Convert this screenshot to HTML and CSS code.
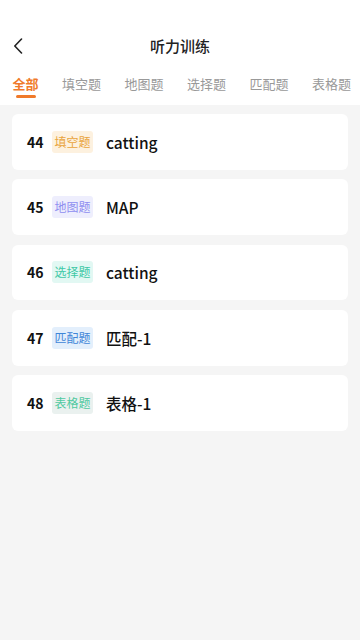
FILE: index.html
```html
<!DOCTYPE html>
<html lang="zh">
<head>
<meta charset="utf-8">
<meta name="viewport" content="width=device-width, initial-scale=1">
<title>听力训练</title>
<link rel="stylesheet" href="styles.css">
</head>
<body>
<header class="header">
  <div class="statusbar"></div>
  <div class="nav">
    <span class="back">
      <svg width="10" height="16" viewBox="0 0 10 16"><path d="M8.5 1 L1.8 8 L8.5 15" fill="none" stroke="#222" stroke-width="1.6" stroke-linecap="round" stroke-linejoin="round"/></svg>
    </span>
    <h1 class="title">听力训练</h1>
    <span></span>
  </div>
  <nav class="tabs">
    <div class="tab active"><span class="tab-text">全部</span><span class="tab-line"></span></div>
    <div class="tab"><span class="tab-text">填空题</span><span class="tab-line"></span></div>
    <div class="tab"><span class="tab-text">地图题</span><span class="tab-line"></span></div>
    <div class="tab"><span class="tab-text">选择题</span><span class="tab-line"></span></div>
    <div class="tab"><span class="tab-text">匹配题</span><span class="tab-line"></span></div>
    <div class="tab"><span class="tab-text">表格题</span><span class="tab-line"></span></div>
  </nav>
</header>
<main class="list">
  <div class="card"><span class="num">44</span><span class="tag tag-fill">填空题</span><span class="name">catting</span></div>
  <div class="card"><span class="num">45</span><span class="tag tag-map">地图题</span><span class="name">MAP</span></div>
  <div class="card"><span class="num">46</span><span class="tag tag-choice">选择题</span><span class="name">catting</span></div>
  <div class="card"><span class="num">47</span><span class="tag tag-match">匹配题</span><span class="name">匹配-1</span></div>
  <div class="card"><span class="num">48</span><span class="tag tag-table">表格题</span><span class="name">表格-1</span></div>
</main>
</body>
</html>
```
FILE: styles.css
```css
* { box-sizing: border-box; }
html, body { margin: 0; padding: 0; }
body {
  width: 360px;
  min-height: 640px;
  background: #f5f5f5;
  font-family: "Noto Sans CJK SC", "Noto Sans", sans-serif;
  color: #111;
}
.header { background: #fff; }
.statusbar { height: 24px; }
.nav {
  height: 44px;
  display: grid;
  grid-template-columns: 40px 1fr 40px;
  align-items: center;
}
.back {
  display: flex;
  align-items: center;
  padding-left: 13px;
  height: 44px;
}
.title {
  margin: 0;
  text-align: center;
  font-size: 15px;
  font-weight: 500;
  color: #222;
  line-height: 22px;
}
.tabs {
  height: 37px;
  display: flex;
  gap: 23.5px;
  padding: 7px 0 0 12.5px;
  white-space: nowrap;
  overflow: hidden;
}
.tab {
  display: flex;
  flex-direction: column;
  align-items: center;
}
.tab-text {
  font-size: 13px;
  line-height: 18px;
  color: #999;
}
.tab-line {
  width: 20px;
  height: 3px;
  margin-top: 1.5px;
  border-radius: 2px;
  background: transparent;
}
.tab.active .tab-text { color: #f07a2a; font-weight: 700; }
.tab.active .tab-line { background: #f07a2a; }
.list {
  padding: 9px 12px;
  display: flex;
  flex-direction: column;
  gap: 9.6px;
}
.card {
  height: 55.7px;
  background: #fff;
  border-radius: 6px;
  display: flex;
  align-items: center;
  padding-left: 15px;
}
.num {
  width: 25px;
  font-size: 14px;
  font-weight: 700;
  color: #111;
}
.tag {
  width: 41px;
  height: 22px;
  border-radius: 3px;
  font-size: 12px;
  line-height: 22px;
  text-align: center;
  margin-right: 13px;
}
.tag-fill { background: #fdf1df; color: #e9a43c; }
.tag-map { background: #eeeefd; color: #8f8ff0; }
.tag-choice { background: #e2f8f3; color: #3ec8a6; }
.tag-match { background: #e3effc; color: #3f86d8; }
.tag-table { background: #eaf1ef; color: #4ec9a0; }
.name {
  font-size: 15.5px;
  font-weight: 500;
  color: #111;
}
```
